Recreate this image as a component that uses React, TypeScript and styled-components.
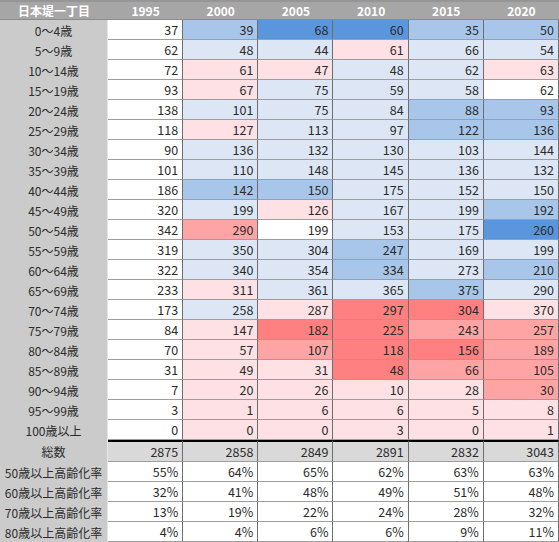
import styled, { createGlobalStyle } from "styled-components";

const GlobalStyle = createGlobalStyle`
  html, body {
    margin: 0;
    padding: 0;
    background: #ffffff;
  }
  body {
    font-family: "Noto Sans CJK JP", "Noto Sans", sans-serif;
  }
`;

type Tone = "w" | "b" | "m" | "s" | "r" | "p" | "x";

const toneColor: Record<Tone, string> = {
  w: "#ffffff",
  b: "#dce6f4",
  m: "#a8c6ea",
  s: "#5a96dd",
  r: "#fde1e4",
  p: "#ffa4a4",
  x: "#ff8080",
};

const years = [1995, 2000, 2005, 2010, 2015, 2020];

// 値:色 をスペース区切りで
const ageRows: [string, string][] = [
  ["0～4歳", "37:w 39:m 68:s 60:s 35:m 50:m"],
  ["5～9歳", "62:w 48:b 44:b 61:r 66:b 54:b"],
  ["10～14歳", "72:w 61:r 47:r 48:b 62:b 63:r"],
  ["15～19歳", "93:w 67:r 75:b 59:b 58:b 62:w"],
  ["20～24歳", "138:w 101:b 75:b 84:b 88:m 93:m"],
  ["25～29歳", "118:w 127:r 113:b 97:b 122:m 136:m"],
  ["30～34歳", "90:w 136:b 132:b 130:b 103:b 144:b"],
  ["35～39歳", "101:w 110:b 148:b 145:b 136:b 132:b"],
  ["40～44歳", "186:w 142:m 150:m 175:b 152:b 150:b"],
  ["45～49歳", "320:w 199:b 126:r 167:b 199:b 192:m"],
  ["50～54歳", "342:w 290:p 199:w 153:b 175:b 260:s"],
  ["55～59歳", "319:w 350:b 304:b 247:m 169:b 199:b"],
  ["60～64歳", "322:w 340:b 354:b 334:m 273:b 210:m"],
  ["65～69歳", "233:w 311:r 361:b 365:b 375:m 290:b"],
  ["70～74歳", "173:w 258:b 287:r 297:x 304:x 370:r"],
  ["75～79歳", "84:w 147:r 182:x 225:x 243:p 257:p"],
  ["80～84歳", "70:w 57:r 107:p 118:x 156:x 189:p"],
  ["85～89歳", "31:w 49:r 31:r 48:x 66:p 105:p"],
  ["90～94歳", "7:w 20:r 26:r 10:r 28:r 30:p"],
  ["95～99歳", "3:w 1:r 6:r 6:r 5:r 8:r"],
  ["100歳以上", "0:w 0:r 0:r 3:r 0:r 1:r"],
];

const totals = [2875, 2858, 2849, 2891, 2832, 3043];

const rates: [string, number[]][] = [
  ["50歳以上高齢化率", [55, 64, 65, 62, 63, 63]],
  ["60歳以上高齢化率", [32, 41, 48, 49, 51, 48]],
  ["70歳以上高齢化率", [13, 19, 22, 24, 28, 32]],
  ["80歳以上高齢化率", [4, 4, 6, 6, 9, 11]],
];

function parseRow(s: string) {
  return s.split(" ").map((p) => {
    const [v, t] = p.split(":");
    return { value: v, tone: t as Tone };
  });
}

function App() {
  return (
    <>
      <GlobalStyle />
      <Sheet>
        <HeadCell>日本堤一丁目</HeadCell>
        {years.map((y) => (
          <HeadCell key={y}>{y}</HeadCell>
        ))}

        {ageRows.map(([label, row]) => (
          <Row key={label}>
            <LabelCell>{label}</LabelCell>
            {parseRow(row).map((c, i) => (
              <ValueCell key={i} $bg={toneColor[c.tone]}>
                {c.value}
              </ValueCell>
            ))}
          </Row>
        ))}

        <LabelCell>総数</LabelCell>
        {totals.map((t, i) => (
          <TotalCell key={i}>{t}</TotalCell>
        ))}

        {rates.map(([label, vals]) => (
          <Row key={label}>
            <LabelCell>{label}</LabelCell>
            {vals.map((v, i) => (
              <ValueCell key={i} $bg="#ffffff">
                {v}%
              </ValueCell>
            ))}
          </Row>
        ))}
      </Sheet>
    </>
  );
}

const Sheet = styled.div`
  display: grid;
  grid-template-columns: 108px repeat(6, 1fr);
  grid-template-rows: repeat(27, 1fr);
  width: 559px;
  height: 542px;
  font-size: 12.5px;
  color: #2b2b2b;
`;

const Row = styled.div`
  display: contents;
`;

const HeadCell = styled.div`
  display: flex;
  align-items: center;
  justify-content: center;
  background: #a6a6a6;
  color: #ffffff;
  font-size: 12px;
  font-weight: bold;
  border-top: 2px solid #969696;
  border-bottom: 1px solid #8c8c8c;
  box-sizing: border-box;
`;

const LabelCell = styled.div`
  display: flex;
  align-items: center;
  justify-content: center;
  background: #cbcbcb;
  border-right: 1px solid #e6e6e6;
  font-size: 12px;
  white-space: nowrap;
  box-sizing: border-box;
`;

const ValueCell = styled.div<{ $bg: string }>`
  display: flex;
  align-items: center;
  justify-content: flex-end;
  padding-right: 4px;
  background: ${(p) => p.$bg};
  border-right: 1px solid #6e6e6e;
  border-bottom: 1px solid #9e9e9e;
  box-sizing: border-box;
`;

const TotalCell = styled(ValueCell).attrs({ $bg: "#d9d9d9" })`
  border-top: 2px solid #000000;
`;

export default App;
